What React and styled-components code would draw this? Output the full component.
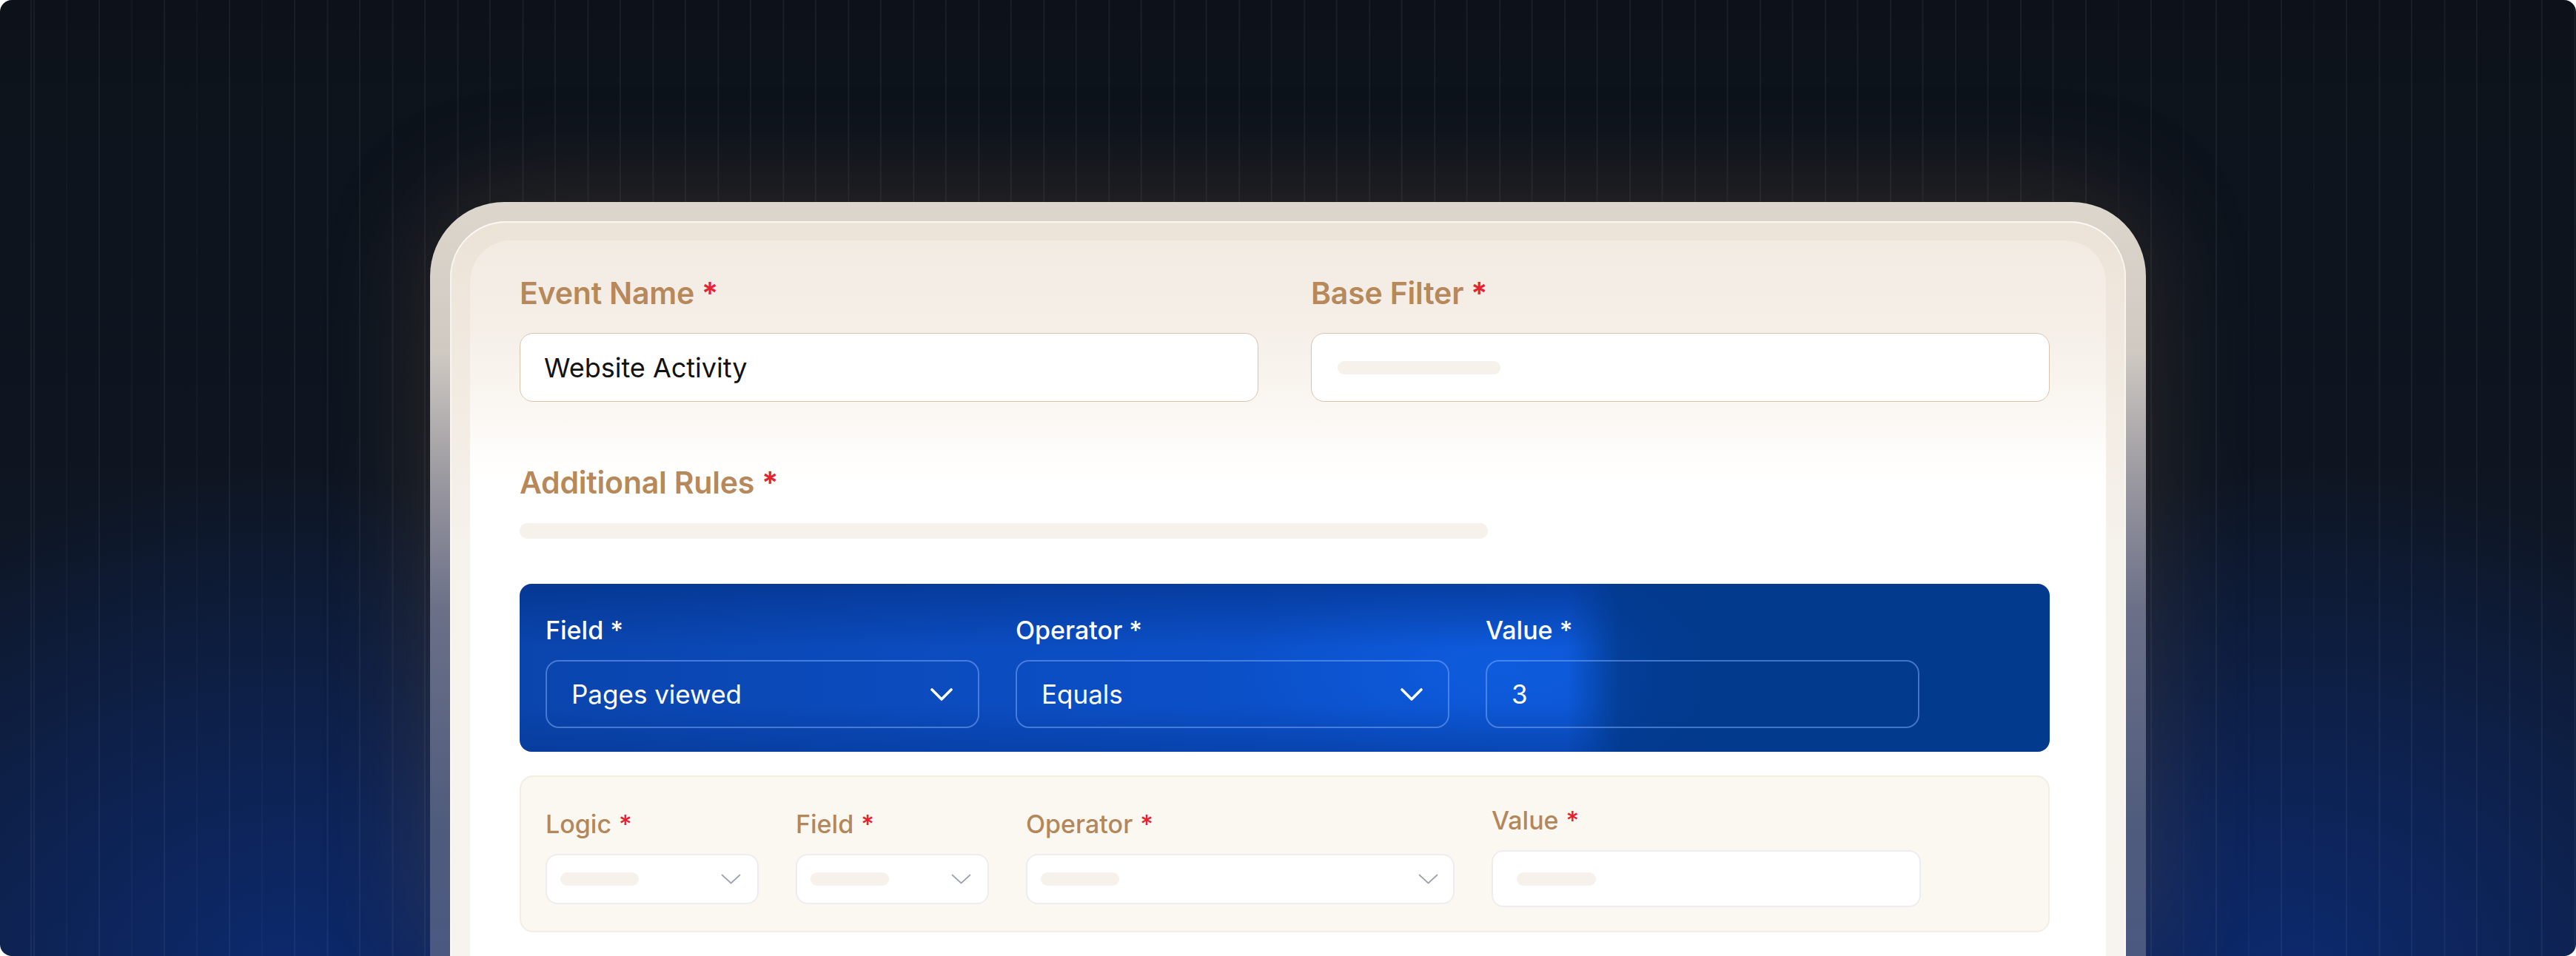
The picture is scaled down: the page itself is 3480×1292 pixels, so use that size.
import React from "react";
import styled, { createGlobalStyle } from "styled-components";

const Global = createGlobalStyle`
  html, body { margin: 0; padding: 0; background: #ffffff; }
  body { font-family: Inter, "Noto Sans", "Liberation Sans", sans-serif; }
  *, *::before, *::after { box-sizing: border-box; }
`;

const Frame = styled.div`
  width: 3480px;
  height: 1292px;
  border-radius: 16px;
  overflow: hidden;
  display: flex;
  flex-direction: column;
  align-items: center;
  padding-top: 273px;
  background:
    repeating-linear-gradient(90deg, rgba(255,255,255,0.05) 0 2px, transparent 2px 44px) 45px 0,
    radial-gradient(ellipse 820px 680px at 380px 1320px, rgba(12,42,112,0.95), rgba(12,42,112,0) 100%),
    radial-gradient(ellipse 820px 680px at 3100px 1320px, rgba(12,42,112,0.95), rgba(12,42,112,0) 100%),
    radial-gradient(ellipse 1500px 500px at 1740px 1300px, rgba(14,40,100,0.7), rgba(14,40,100,0) 100%),
    linear-gradient(180deg, #0d121a 0%, #0e1520 45%, #0f1b33 100%);
`;

const Bezel = styled.div`
  width: 2318px;
  flex: 1;
  display: flex;
  padding: 26px 27px 0 27px;
  border-radius: 100px 100px 0 0;
  background: linear-gradient(180deg, #ddd6cc 0%, #cfc9c2 20%, #9a98a0 37%, #6b7088 54%, #505c7d 82%, #4b5880 100%);
  box-shadow: 0 -10px 140px rgba(140, 105, 70, 0.26);
`;

const Ring = styled.div`
  flex: 1;
  display: flex;
  padding: 26px 27px 0 27px;
  border-radius: 76px 76px 0 0;
  background: linear-gradient(180deg, #ece3d7 0%, #f1eae1 20%, #f6f2ec 45%, #f7f4ef 100%);
  box-shadow: inset 0 2px 1px rgba(255, 255, 255, 0.75), inset 2px 0 1px rgba(255, 255, 255, 0.5), inset -2px 0 1px rgba(255, 255, 255, 0.5);
`;

const Content = styled.div`
  flex: 1;
  padding: 47px 76px 0 67px;
  border-radius: 56px 56px 0 0;
  background: linear-gradient(180deg, #f2ebe2 0px, #f5efe8 120px, #faf6f1 220px, #fefdfb 290px, #ffffff 330px);
`;

const TopGrid = styled.div`
  display: grid;
  grid-template-columns: 1fr 1fr;
  column-gap: 71px;
`;

const Field = styled.div`
  display: flex;
  flex-direction: column;
  gap: 30px;
`;

const BigLabel = styled.div`
  font-size: 41px;
  line-height: 48px;
  font-weight: 600;
  color: #b6885a;
  letter-spacing: -0.2px;
`;

const Star = styled.span`
  color: ${(p) => (p.$white ? "#ffffff" : "#e5222f")};
  margin-left: 10px;
`;

const TextInput = styled.div`
  height: 93px;
  border: 1.5px solid #d8c4ab;
  border-radius: 18px;
  background: #ffffff;
  display: flex;
  align-items: center;
  padding: 0 ${(p) => p.$pl || 32}px;
  font-size: 36px;
  color: #121212;
`;

const Skeleton = styled.div`
  width: ${(p) => p.$w}px;
  height: ${(p) => p.$h || 18}px;
  border-radius: 10px;
  background: ${(p) => p.$c || "#f6f1ea"};
  flex: none;
`;

const RulesHeader = styled.div`
  margin-top: 85px;
  display: flex;
  flex-direction: column;
  gap: 31px;
`;

const BluePanel = styled.div`
  margin-top: 61px;
  height: 227px;
  border-radius: 16px;
  padding: 43px 35px 32px 35px;
  display: grid;
  grid-template-columns: repeat(3, 586px);
  column-gap: 49px;
  background:
    linear-gradient(90deg, rgba(2, 58, 142, 0) 68.5%, rgba(2, 58, 142, 0.85) 72%, #023a8e 78%),
    linear-gradient(180deg, rgba(2, 45, 125, 0.55) 0%, rgba(2, 45, 125, 0) 38%, rgba(2, 45, 125, 0) 72%, rgba(2, 45, 125, 0.35) 100%),
    radial-gradient(ellipse 360px 140px at 1330px 115px, rgba(14, 92, 222, 0.95), rgba(14, 92, 222, 0) 100%),
    linear-gradient(90deg, #0a45ad 0%, #0b4cc0 30%, #0b51cb 55%, #0b53cf 70%, #023a8e 76%, #023a8e 100%);
`;

const BlueCol = styled.div`
  display: flex;
  flex-direction: column;
  gap: 20px;
`;

const BlueLabel = styled.div`
  font-size: 34px;
  line-height: 40px;
  font-weight: 500;
  color: #ffffff;
`;

const BlueBox = styled.div`
  height: 92px;
  border: 2px solid rgba(120, 165, 245, 0.55);
  border-radius: 18px;
  display: flex;
  align-items: center;
  justify-content: space-between;
  padding: 0 33px;
  font-size: 35px;
  color: #ffffff;
`;

const BeigePanel = styled.div`
  margin-top: 32px;
  height: 212px;
  border: 2px solid #f4ede3;
  border-radius: 18px;
  background: #fbf8f2;
  padding: 39px 33px 0 33px;
  display: grid;
  grid-template-columns: 288px 261px 579px 580px;
  column-gap: 50px;
  align-items: center;
  align-content: start;
`;

const BeigeCol = styled.div`
  display: flex;
  flex-direction: column;
  gap: 20px;
`;

const SmallLabel = styled.div`
  font-size: 34px;
  line-height: 40px;
  font-weight: 500;
  color: #b4875a;
`;

const LightBox = styled.div`
  height: ${(p) => p.$h}px;
  border: 2px solid #eeecf0;
  border-radius: 16px;
  background: #ffffff;
  display: flex;
  align-items: center;
  justify-content: space-between;
  padding: 0 ${(p) => p.$pr}px 0 ${(p) => p.$pl}px;
`;

const ChevronWhite = () => (
  <svg width="32" height="19" viewBox="0 0 32 19" fill="none">
    <polyline points="3,3 16,16 29,3" stroke="#ffffff" strokeWidth="3.6" strokeLinecap="round" strokeLinejoin="round" />
  </svg>
);

const ChevronGrey = () => (
  <svg width="27" height="14" viewBox="0 0 27 14" fill="none">
    <polyline points="1.5,1.5 13.5,12.5 25.5,1.5" stroke="#9da2af" strokeWidth="1.7" strokeLinecap="round" strokeLinejoin="round" />
  </svg>
);

const Req = ({ children, white }) => (
  <>
    {children}
    <Star $white={white}>*</Star>
  </>
);

export default function App() {
  return (
    <>
      <Global />
      <Frame>
        <Bezel>
          <Ring>
            <Content>
              <TopGrid>
                <Field>
                  <BigLabel><Req>Event Name</Req></BigLabel>
                  <TextInput>Website Activity</TextInput>
                </Field>
                <Field>
                  <BigLabel><Req>Base Filter</Req></BigLabel>
                  <TextInput $pl={35}>
                    <Skeleton $w={220} $h={18} />
                  </TextInput>
                </Field>
              </TopGrid>

              <RulesHeader>
                <BigLabel><Req>Additional Rules</Req></BigLabel>
                <Skeleton $w={1308} $h={21} $c="#f6f1ea" />
              </RulesHeader>

              <BluePanel>
                <BlueCol>
                  <BlueLabel>Field *</BlueLabel>
                  <BlueBox>
                    <span>Pages viewed</span>
                    <ChevronWhite />
                  </BlueBox>
                </BlueCol>
                <BlueCol>
                  <BlueLabel>Operator *</BlueLabel>
                  <BlueBox>
                    <span>Equals</span>
                    <ChevronWhite />
                  </BlueBox>
                </BlueCol>
                <BlueCol>
                  <BlueLabel>Value *</BlueLabel>
                  <BlueBox>
                    <span>3</span>
                  </BlueBox>
                </BlueCol>
              </BluePanel>

              <BeigePanel>
                <BeigeCol>
                  <SmallLabel><Req>Logic</Req></SmallLabel>
                  <LightBox $h={68} $pl={18} $pr={22}>
                    <Skeleton $w={106} $h={18} />
                    <ChevronGrey />
                  </LightBox>
                </BeigeCol>
                <BeigeCol>
                  <SmallLabel><Req>Field</Req></SmallLabel>
                  <LightBox $h={68} $pl={18} $pr={22}>
                    <Skeleton $w={106} $h={18} />
                    <ChevronGrey />
                  </LightBox>
                </BeigeCol>
                <BeigeCol>
                  <SmallLabel><Req>Operator</Req></SmallLabel>
                  <LightBox $h={68} $pl={18} $pr={20}>
                    <Skeleton $w={106} $h={18} />
                    <ChevronGrey />
                  </LightBox>
                </BeigeCol>
                <BeigeCol>
                  <SmallLabel><Req>Value</Req></SmallLabel>
                  <LightBox $h={77} $pl={32} $pr={20}>
                    <Skeleton $w={107} $h={18} />
                  </LightBox>
                </BeigeCol>
              </BeigePanel>
            </Content>
          </Ring>
        </Bezel>
      </Frame>
    </>
  );
}
